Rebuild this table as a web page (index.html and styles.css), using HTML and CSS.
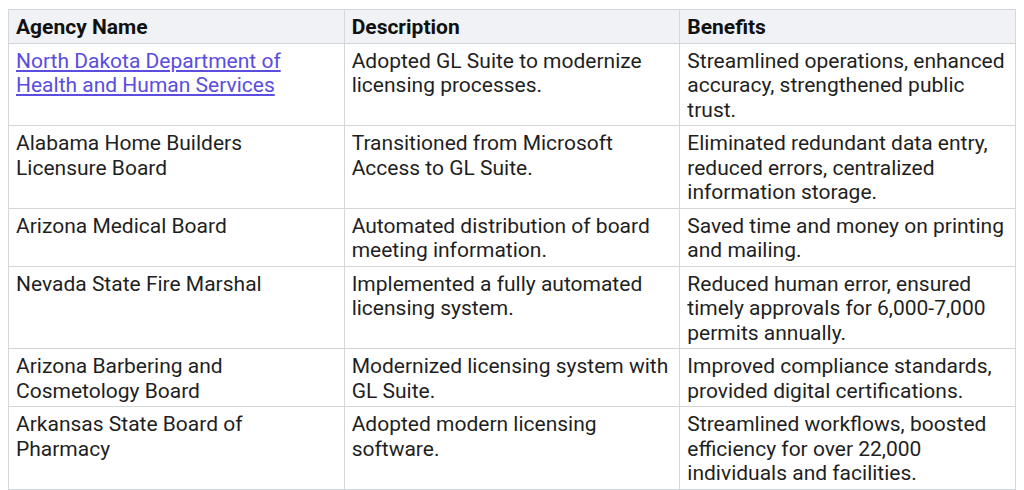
FILE: index.html
```html
<!DOCTYPE html>
<html>
<head>
<meta charset="utf-8">
<link rel="stylesheet" href="styles.css">
</head>
<body>
<table class="agencies">
  <thead>
    <tr><th>Agency Name</th><th>Description</th><th>Benefits</th></tr>
  </thead>
  <tbody>
    <tr>
      <td><a href="#">North Dakota Department of Health and Human Services</a></td>
      <td>Adopted GL Suite to modernize licensing processes.</td>
      <td>Streamlined operations, enhanced accuracy, strengthened public trust.</td>
    </tr>
    <tr>
      <td>Alabama Home Builders Licensure Board</td>
      <td>Transitioned from Microsoft Access to GL Suite.</td>
      <td>Eliminated redundant data entry, reduced errors, centralized information storage.</td>
    </tr>
    <tr>
      <td>Arizona Medical Board</td>
      <td>Automated distribution of board meeting information.</td>
      <td>Saved time and money on printing and mailing.</td>
    </tr>
    <tr>
      <td>Nevada State Fire Marshal</td>
      <td>Implemented a fully automated licensing system.</td>
      <td>Reduced human error, ensured timely approvals for 6,000-7,000 permits annually.</td>
    </tr>
    <tr>
      <td>Arizona Barbering and Cosmetology Board</td>
      <td>Modernized licensing system with GL Suite.</td>
      <td>Improved compliance standards, provided digital certifications.</td>
    </tr>
    <tr>
      <td>Arkansas State Board of Pharmacy</td>
      <td>Adopted modern licensing software.</td>
      <td>Streamlined workflows, boosted efficiency for over 22,000 individuals and facilities.</td>
    </tr>
  </tbody>
</table>
</body>
</html>
```
FILE: styles.css
```css
body {
  margin: 9px 8px 8px;
  font-family: Roboto, "Liberation Sans", sans-serif;
  color: #1f1f1f;
  background: #fff;
}
.agencies {
  width: 100%;
  border-collapse: collapse;
  table-layout: fixed;
  font-size: 21px;
  line-height: 24.5px;
}
.agencies th,
.agencies td {
  border: 1px solid #d3d6db;
  padding: 5px 7px 3px;
  text-align: left;
  vertical-align: top;
}
.agencies th {
  background: #f0f2f5;
  font-weight: 700;
  color: #111;
}
.agencies a {
  color: #5a4de0;
  text-decoration: underline;
}
```
